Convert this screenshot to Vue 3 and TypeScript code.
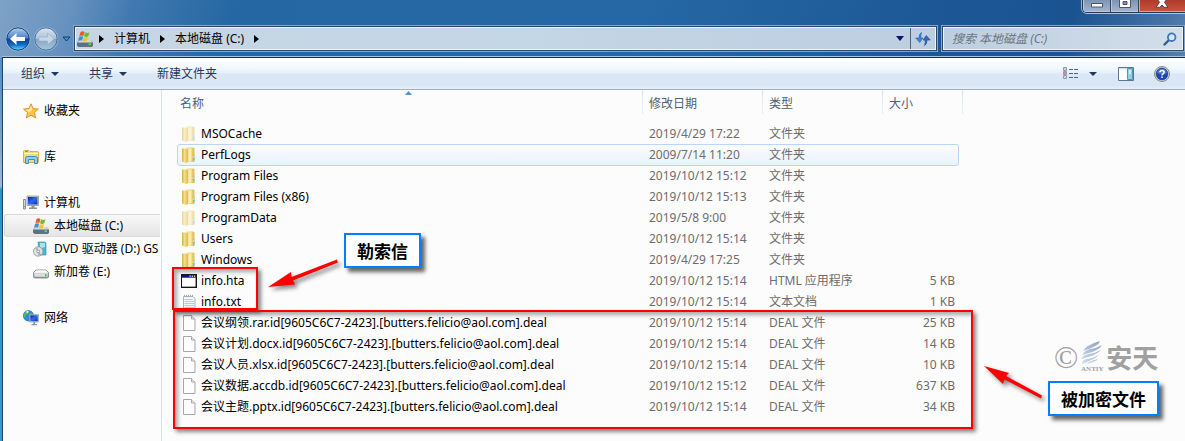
<script setup lang="ts">
interface Entry {
  name: string
  date: string
  type: string
  size: string
  icon: 'folder' | 'hta' | 'txt' | 'file'
  hidden?: boolean
  hover?: boolean
}

interface Place {
  label: string
  icon: string
  child?: boolean
  current?: boolean
}

const folder = (name: string, date: string, extra: Partial<Entry> = {}): Entry => ({
  name, date, type: '文件夹', size: '', icon: 'folder', ...extra,
})
const locked = (name: string, date: string, size: string): Entry => ({
  name: `${name}.id[9605C6C7-2423].[butters.felicio@aol.com].deal`,
  date, size, type: 'DEAL 文件', icon: 'file',
})

const entries: Entry[] = [
  folder('MSOCache', '2019/4/29 17:22', { hidden: true }),
  folder('PerfLogs', '2009/7/14 11:20', { hover: true }),
  folder('Program Files', '2019/10/12 15:12'),
  folder('Program Files (x86)', '2019/10/12 15:13'),
  folder('ProgramData', '2019/5/8 9:00', { hidden: true }),
  folder('Users', '2019/10/12 15:14'),
  folder('Windows', '2019/4/29 17:25'),
  { name: 'info.hta', date: '2019/10/12 15:14', type: 'HTML 应用程序', size: '5 KB', icon: 'hta' },
  { name: 'info.txt', date: '2019/10/12 15:14', type: '文本文档', size: '1 KB', icon: 'txt' },
  locked('会议纲领.rar', '2019/10/12 15:14', '25 KB'),
  locked('会议计划.docx', '2019/10/12 15:14', '14 KB'),
  locked('会议人员.xlsx', '2019/10/12 15:14', '10 KB'),
  locked('会议数据.accdb', '2019/10/12 15:12', '637 KB'),
  locked('会议主题.pptx', '2019/10/12 15:14', '34 KB'),
]

const groups: Place[][] = [
  [{ label: '收藏夹', icon: 'star' }],
  [{ label: '库', icon: 'library' }],
  [
    { label: '计算机', icon: 'computer' },
    { label: '本地磁盘 (C:)', icon: 'system', child: true, current: true },
    { label: 'DVD 驱动器 (D:) GS', icon: 'dvd', child: true },
    { label: '新加卷 (E:)', icon: 'drive', child: true },
  ],
  [{ label: '网络', icon: 'network' }],
]
</script>

<template>
  <div class="window">
    <svg class="defs" width="0" height="0" aria-hidden="true">
      <defs>
        <linearGradient id="folderBack" x1="0" x2="1">
          <stop offset="0" stop-color="#f9e99b" /><stop offset="1" stop-color="#dfbf58" />
        </linearGradient>
        <linearGradient id="folderFront" x1="0" x2="1">
          <stop offset="0" stop-color="#cfae48" /><stop offset=".4" stop-color="#f5e08a" /><stop offset="1" stop-color="#dcb950" />
        </linearGradient>
        <linearGradient id="orbBlue" x1="0" y1="0" x2="0" y2="1">
          <stop offset="0" stop-color="#b4cdec" /><stop offset=".46" stop-color="#4a7fc4" />
          <stop offset=".5" stop-color="#0a3f94" /><stop offset=".75" stop-color="#1069c4" /><stop offset="1" stop-color="#5ee0ff" />
        </linearGradient>
        <linearGradient id="orbGray" x1="0" y1="0" x2="0" y2="1">
          <stop offset="0" stop-color="#dbe5f0" /><stop offset=".5" stop-color="#a9c0d8" />
          <stop offset=".52" stop-color="#86a5c6" /><stop offset="1" stop-color="#a9c6e0" />
        </linearGradient>
        <linearGradient id="screen" x1="0" y1="0" x2="1" y2="1">
          <stop offset="0" stop-color="#0a1fa8" /><stop offset=".5" stop-color="#2f6bea" /><stop offset="1" stop-color="#0b2bb0" />
        </linearGradient>
        <linearGradient id="metal" x1="0" y1="0" x2="0" y2="1">
          <stop offset="0" stop-color="#f2f4f5" /><stop offset="1" stop-color="#8d9498" />
        </linearGradient>
        <linearGradient id="wing" x1="1" y1="0" x2="0" y2="1">
          <stop offset="0" stop-color="#8b9dbc" /><stop offset="1" stop-color="#cfe2f2" />
        </linearGradient>
        <symbol id="i-system" viewBox="0 0 16 16">
          <path d="M2.5 9h11L16 11.5v3L15 16H1.500L0 14.500v-3z" fill="#687278" />
          <path d="M2.500 9h11l2 2.500H.5z" fill="#d3d9dc" />
          <path d="M1 12h14v2.500H1z" fill="#4f7590" />
          <path d="M11.500 12.500h2.500v1.500h-2.500z" fill="#5de05c" />
          <path d="M3.500 1Q5.500-.3 7.500 1L6.400 5Q4.500 4 2.400 5z" fill="#ef5a24" />
          <path d="M8.200 1.300Q10.200 2.600 12.500 1.200L11.300 5.300Q9 6.500 7 5.300z" fill="#76b82a" />
          <path d="M2.200 5.700Q4.200 4.700 6.100 5.800L5 9.800Q3.200 8.800 1 9.800z" fill="#3a8fe0" />
          <path d="M6.800 6Q8.800 7 11.100 6L9.900 10Q7.800 11 5.700 10z" fill="#fbc22c" />
        </symbol>
        <symbol id="i-star" viewBox="0 0 16 16">
          <path d="M8 .8 10.100 5.600 15.400 6.100 11.400 9.600 12.700 15 8 12.100 3.300 15 4.600 9.600.6 6.100 5.900 5.600z" fill="#ffc63a" stroke="#e2902f" stroke-linejoin="round" />
          <path d="M8 2.600 9.400 6.400 5.300 10 5.600 8.700 2.600 6.700 6.500 6.400z" fill="#fff0a5" />
        </symbol>
        <symbol id="i-library" viewBox="0 0 16 16">
          <path d="M.5 13.500V2.500Q.5 1.500 1.500 1.500h4.500l1 1h7.500q1 0 1 1v10z" fill="#f1dc86" stroke="#cfb25c" />
          <path d="M1 4.500h14" stroke="#fff7cf" /><path d="M2 2.500h3" stroke="#5fb55e" />
          <path d="M2.500 14.500V9.500Q2.500 7.500 4.500 7.500h8q2 0 2 2v5h-3v-4h-6v4z" fill="#8fd0f2" stroke="#3f8dc4" />
        </symbol>
        <symbol id="i-computer" viewBox="0 0 16 16">
          <path d="M.5 4.500h2v9.500h-2z" fill="#d5d9dc" stroke="#8b9297" />
          <path d="M1 11h1v1H1z" fill="#45c13d" />
          <path d="M4 1h11.500v9.500H4z" fill="#c7cdd4" stroke="#8791a0" stroke-width=".7" />
          <path d="M5 2h9.500v7.500H5z" fill="url(#screen)" />
          <path d="M8.500 10.500h3v2h2.500V14H6v-1.500h2.500z" fill="#8c949a" />
        </symbol>
        <symbol id="i-dvd" viewBox="0 0 16 16">
          <path d="M5 1h7l1 1v12H6z" fill="#4fb6d2" stroke="#3c93b0" stroke-width=".7" />
          <path d="M7 2h5v4q-3 0-5 3z" fill="#a8e3ee" />
          <circle cx="5.200" cy="10.500" r="4.700" fill="#dfe3e5" stroke="#8b9499" stroke-width=".8" />
          <path d="M5.200 10.500 2 7.500 4.500 6.200zM5.200 10.500l3.300 3-3 1.500z" fill="#a7b2b6" />
          <circle cx="5.200" cy="10.500" r="1.400" fill="#fff" stroke="#7e888c" stroke-width=".8" />
        </symbol>
        <symbol id="i-drive" viewBox="0 0 16 16">
          <path d="M3 6h10l2.500 2.500v4.500L14.500 14h-13L.5 13V8.500z" fill="url(#metal)" stroke="#777f84" stroke-width=".8" />
          <path d="M3.200 6.400h9.600L15 8.700H1z" fill="#fafafa" />
          <path d="M1.500 9.500h13v3.200h-13z" fill="#dcdfe1" />
          <path d="M12 10.200h1.500v2H12z" fill="#3cbb3c" />
        </symbol>
        <symbol id="i-network" viewBox="0 0 16 16">
          <circle cx="5.500" cy="5.800" r="5.200" fill="#2a8de0" stroke="#1a62ad" stroke-width=".6" />
          <path d="M2 2.500Q5 0 6.500 1.500L5 4 3 5 2 8Q-.5 5 2 2.500zM6 4l3-1.500Q11 5 9 8L7 7z" fill="#55c03c" />
          <path d="M3 1.500Q5 .7 6 1.500L4 3.500z" fill="#d6f3ff" />
          <path d="M6.500 4.500h9v7.500h-9z" fill="#c5d2e0" stroke="#8494a5" stroke-width=".6" />
          <path d="M7.300 5.300h7.400v5.900H7.300z" fill="url(#screen)" />
          <path d="M10.300 12h1.700v2h2v1.300H8.500V14h1.800z" fill="#8897a5" />
        </symbol>
        <symbol id="i-folder" viewBox="0 0 16 16">
          <path d="M5 .5h7.500l1 1v13.500L5 15z" fill="url(#folderBack)" />
          <path d="M12 8.500h1.500v5H12z" fill="#6fb8ea" /><path d="M12.500 9h.7v2h-.7z" fill="#fff" />
          <path d="M1 1.500H5l2 1v12.500l-2 1-4-1.500z" fill="url(#folderFront)" />
          <path d="M7.500 2 10.500 1v13l-3 1.300z" fill="#f9ecb2" />
        </symbol>
        <symbol id="i-hta" viewBox="0 0 16 16">
          <path d="M0 1h16v14H0z" fill="#161616" /><path d="M1 2h14v11.500H1z" fill="#9a9a9a" />
          <path d="M1 5h13v8.500H1z" fill="#fff" /><path d="M1 2h14v2.500H1z" fill="#10109a" />
          <path d="M8.500 2.500h1.200v1.200H8.500zM10.700 2.500h1.200v1.200h-1.200zM12.900 2.500h1.200v1.200h-1.200z" fill="#fff" />
        </symbol>
        <symbol id="i-txt" viewBox="0 0 16 16">
          <path d="M2.500 2.500h9.500l2 2v11H2.500z" fill="#f1f6fb" stroke="#a9b1b8" />
          <path d="M3.500 5.500h8M3.500 7.500h9.500M3.500 9.500h9.500M3.500 11.500h9.500M3.500 13.500h9.500" stroke="#b4c9e2" />
          <path d="M3.500 3V.8M5.500 3V.8M7.500 3V.8M9.500 3V.8M11.500 3V.8" stroke="#a2a9af" />
        </symbol>
        <symbol id="i-file" viewBox="0 0 16 16">
          <path d="M2.500.5h8l3.500 3.500v11.500H2.500z" fill="#fdfdfd" stroke="#a6a6a6" />
          <path d="M10.500.5v3.500h3.500" fill="#e8e8e8" stroke="#ababab" />
        </symbol>
      </defs>
    </svg>

    <header class="caption">
      <div class="caption-buttons">
        <button class="cap" aria-label="最小化">
          <svg width="12" height="5" viewBox="0 0 12 5"><path d="M.5.5h11v3.500H.5z" fill="#fff" stroke="#4c5668" /></svg>
        </button>
        <button class="cap" aria-label="最大化">
          <svg width="12" height="10" viewBox="0 0 12 10"><path d="M.5.5h11v9H.5z" fill="#fff" stroke="#4c5668" /><path d="M4 3.500h4v3H4z" fill="#7f93b3" stroke="#4c5668" /></svg>
        </button>
        <button class="cap close" aria-label="关闭">
          <svg width="14" height="11" viewBox="0 0 14 11"><path d="M1 .5h4L7 3l2-2.500h4L9.500 5.300l3.500 5H9L7 8l-2 2.300H1l3.500-5z" fill="#fff" stroke="#56414b" /></svg>
        </button>
      </div>
    </header>

    <div class="navbar">
      <div class="travel">
        <div class="orbs">
          <button aria-label="后退">
            <svg width="26" height="26" viewBox="0 0 26 26">
              <circle cx="13" cy="13" r="12.300" fill="#b7cfe6" opacity=".6" /><circle cx="13" cy="13" r="11.200" fill="url(#orbBlue)" stroke="#183f72" />
              <path d="M5 13l6.500-6v4H20v4h-8.500v4z" fill="#fff" />
            </svg>
          </button>
          <button aria-label="前进">
            <svg width="26" height="26" viewBox="0 0 26 26">
              <circle cx="13" cy="13" r="12.300" fill="#a8c3dd" opacity=".6" /><circle cx="13" cy="13" r="11.200" fill="url(#orbGray)" stroke="#476f9b" />
              <path d="M21 13l-6.500-6v4H6v4h8.500v4z" fill="#c6d8e8" stroke="#93afc9" stroke-width=".6" />
            </svg>
          </button>
        </div>
        <button class="recent" aria-label="最近的页面">
          <svg width="9" height="6" viewBox="0 0 9 6"><path d="M1 1h7L4.500 5z" fill="#4f8fca" stroke="#123c6c" /></svg>
        </button>
      </div>

      <nav class="address field" aria-label="地址">
        <svg class="i16"><use href="#i-system" /></svg>
        <button class="step" aria-label="展开"><svg width="5" height="8"><path d="M0 0l5 4-5 4z" /></svg></button>
        <a href="#" class="crumb">计算机</a>
        <button class="step" aria-label="展开计算机"><svg width="5" height="8"><path d="M0 0l5 4-5 4z" /></svg></button>
        <a href="#" class="crumb">本地磁盘 (C:)</a>
        <button class="step" aria-label="展开本地磁盘"><svg width="5" height="8"><path d="M0 0l5 4-5 4z" /></svg></button>
        <button class="history" aria-label="以前的位置"><svg width="8" height="5"><path d="M0 0h8L4 5z" fill="#0c1460" /></svg></button>
        <button class="refresh" aria-label="刷新">
          <svg width="16" height="14" viewBox="0 0 16 14">
            <path d="M6.500.5Q4 1.500 4 6H.8L4.700 10.500 8 6H6Q5.500 3 6.500.5z" fill="#3e86d2" stroke="#235fa8" stroke-width=".6" />
            <path d="M9.500 13.500Q12 12.500 12 8h3.200L11.300 3.500 8 8h2Q10.500 11 9.500 13.500z" fill="#3568b8" stroke="#1f4a93" stroke-width=".6" />
          </svg>
        </button>
      </nav>

      <label class="search field">
        <input type="search" placeholder="搜索 本地磁盘 (C:)" aria-label="搜索 本地磁盘 (C:)" />
        <svg width="14" height="14" viewBox="0 0 14 14" fill="none">
          <path d="M1.500 12.500 6 8" stroke="#2b5e9d" stroke-width="2.400" stroke-linecap="round" />
          <circle cx="8.700" cy="5.200" r="3.800" fill="#d5e7f5" stroke="#3978ba" stroke-width="1.800" />
        </svg>
      </label>
    </div>

    <div class="client">
      <div class="toolbar">
        <button>组织<svg width="8" height="4"><path d="M0 0h8L4 4z" /></svg></button>
        <button>共享<svg width="8" height="4"><path d="M0 0h8L4 4z" /></svg></button>
        <button>新建文件夹</button>
        <div class="tools">
          <button class="view" aria-label="更改您的视图">
            <svg width="15" height="13" viewBox="0 0 15 13">
              <path d="M.5.500h3v3h-3zM.5 4.500h3v3h-3zM.5 8.500h3v3h-3z" fill="#fff" stroke="#8c9bb4" />
              <path d="M1.500 1.500h1v1h-1zM1.500 9.500h1v1h-1z" fill="#35507b" /><path d="M1.200 5.200h1.600v1.600H1.200z" fill="#d33" />
              <path d="M6 2.500h4M11 2.500h4M6 6.500h4M11 6.500h4M6 10.500h4M11 10.500h4" stroke="#4f6587" />
            </svg>
          </button>
          <button class="view-more" aria-label="更多选项"><svg width="8" height="4"><path d="M0 0h8L4 4z" /></svg></button>
          <button class="preview" aria-label="显示预览窗格">
            <svg width="16" height="14" viewBox="0 0 16 14">
              <path d="M.5.500h15v13H.5z" fill="#fff" stroke="#5c7590" /><path d="M1 1h14v1.500H1z" fill="#d5e2ee" />
              <path d="M9.500 1.500h5v11h-5z" fill="#8fd3ea" stroke="#4c97b5" /><path d="M11 3h2v4h-2z" fill="#c9eef7" />
            </svg>
          </button>
          <button class="help" aria-label="获取帮助">
            <svg width="16" height="16" viewBox="0 0 16 16">
              <circle cx="8" cy="8" r="7.500" fill="#d6d8db" stroke="#85898f" /><circle cx="8" cy="8" r="5.900" fill="#1b48b5" stroke="#173583" stroke-width=".6" />
              <path d="M3 7Q4 3 8 2.800T13 7Q8 9 3 7z" fill="#6289de" opacity=".7" />
              <path d="M5.900 6.300Q6 4.500 8 4.500T10.100 6.200Q10.100 7.300 8.900 8 8 8.500 8 9.500M8 10.600v1.500" fill="none" stroke="#fff" stroke-width="1.500" />
            </svg>
          </button>
        </div>
      </div>

      <div class="body">
        <nav class="tree" aria-label="导航窗格">
          <ul v-for="(group, g) in groups" :key="g">
            <li v-for="place in group" :key="place.label">
              <a href="#" :class="{ child: place.child, current: place.current }">
                <svg class="i16"><use :href="`#i-${place.icon}`" /></svg><span>{{ place.label }}</span>
              </a>
            </li>
          </ul>
        </nav>

        <main class="content">
          <table>
            <thead>
              <tr>
                <th scope="col" class="sorted" aria-sort="ascending">名称
                  <svg class="sort" width="7" height="4"><path d="M0 4h7L3.500 0z" fill="#5a93b8" /></svg>
                </th>
                <th scope="col">修改日期</th>
                <th scope="col">类型</th>
                <th scope="col">大小</th>
              </tr>
            </thead>
            <tbody>
              <tr v-for="entry in entries" :key="entry.name" :class="{ hover: entry.hover }">
                <td class="name">
                  <svg class="i16" :class="{ faded: entry.hidden }"><use :href="`#i-${entry.icon}`" /></svg>{{ entry.name }}
                </td>
                <td>{{ entry.date }}</td>
                <td>{{ entry.type }}</td>
                <td class="size">{{ entry.size }}</td>
              </tr>
            </tbody>
          </table>
        </main>
      </div>
    </div>

    <div class="frame frame-note"></div>
    <div class="frame frame-locked"></div>
    <svg class="arrow arrow-note" width="72" height="30" viewBox="0 0 72 30">
      <path d="M0 28 23 13 23.500 18 69 .5 70 3.500 25 21.500 27 25.500z" fill="#f00" />
    </svg>
    <svg class="arrow arrow-locked" width="62" height="36" viewBox="0 0 62 36">
      <path d="M0 0 25 7 22 10 58 29.500 57 32.500 20.500 13.500 19 18z" fill="#f00" />
    </svg>
    <div class="callout callout-note">勒索信</div>
    <div class="callout callout-locked">被加密文件</div>

    <div class="brand">
      <span class="copy">©</span>
      <span class="mark">
        <svg width="22" height="24" viewBox="0 0 22 24" fill="url(#wing)">
          <path d="M19 0Q18 5 2 10 5 4 19 0zM21 4Q18 10 1 14 3 10 9 8 16 7 21 4zM20 9Q16 14 0 18 2 14 8 13 15 12 20 9zM18 14Q14 18 1 23 1 19 6 18 13 17 18 14zM17 18Q14 21 5 23 9 20 17 18z" />
        </svg>
        <small>ANTIY</small>
      </span>
      <span class="word">安天</span>
    </div>
  </div>
</template>

<style>
body {
  margin: 0;
}
</style>

<style scoped>
.window {
  position: relative;
  box-sizing: border-box;
  display: flex;
  flex-direction: column;
  min-height: 100vh;
  padding-left: 2px;
  overflow: hidden;
  font: 12px/20px "Noto Sans", "Noto Sans CJK SC", sans-serif;
  color: #000;
  background:
    linear-gradient(#5690c4, #6c9cc8 60px, #9dbbd3 128px, #2f93d0 132px, #3d9ad6) 0 58px / 3px 100% no-repeat,
    linear-gradient(105deg, #7fa2c7 0, #6792bf 70px, #4079b0 130px, #2567a2 230px, #2568a5 620px, #1d5896 900px, #1a5390 1040px, #4a76a8 1140px, #7d99bc 1200px);
}
.defs { position: absolute; }
svg { display: block; flex: none; }
.i16 { width: 16px; height: 16px; }
button {
  display: flex;
  align-items: center;
  justify-content: center;
  padding: 0;
  border: 0;
  background: none;
  font: inherit;
  color: inherit;
}
a { color: inherit; text-decoration: none; }

.caption { display: flex; justify-content: flex-end; height: 26px; }
.caption-buttons {
  display: flex;
  height: 12px;
  border: 1px solid #26384f;
  border-width: 0 0 1px 1px;
  border-radius: 0 0 0 5px;
  box-shadow: 0 1px 0 #b4c5da, -1px 0 0 #9bb2cd;
  overflow: hidden;
}
.cap {
  width: 28px;
  align-items: flex-end;
  padding-bottom: 4px;
  border-right: 1px solid #34465e;
  background: linear-gradient(#7e94b5, #a4b6cf);
  box-shadow: inset 1px -1px 0 #b9c8db;
}
.close { width: 46px; border-right: 0; background: linear-gradient(#b03a2a, #c9563f); box-shadow: inset 1px -1px 0 #e0a08f; }

.navbar { display: flex; align-items: center; height: 25px; padding: 0 2px 5px 0; }
.travel {
  display: flex;
  align-items: center;
  gap: 1px;
  margin-left: 3px;
}
.orbs {
  display: flex;
  gap: 2px;
  border-radius: 13px;
  background: #6f9bc680;
}
.recent { width: 12px; }
.field {
  box-sizing: border-box;
  display: flex;
  align-items: center;
  height: 23px;
  border: 1px solid #f0f4f8;
  outline: 1px solid #2a4868;
  box-shadow: 0 0 0 2px #83a7ca;
  background: #c3d5e5;
}
.address { flex: 1; margin: 0 7px 0 3px; padding-left: 1px; background: linear-gradient(90deg, #c6d5e4, #c4d7e6 50%, #bccee0); }
.step { width: 17px; height: 100%; }
.crumb { padding: 0 4px; white-space: nowrap; }
.history { width: 20px; height: 100%; margin-left: auto; }
.refresh { width: 25px; height: 100%; border-left: 1px solid #4d6682; }
.search { width: 240px; padding-right: 5px; background: linear-gradient(90deg, #bccee0, #d3deea); }
.search input {
  flex: 1;
  min-width: 0;
  padding: 0 0 0 8px;
  border: 0;
  outline: 0;
  background: none;
  font: italic 12px/20px "Noto Sans", "Noto Sans CJK SC", sans-serif;
}
.search input::placeholder { color: #6d7680; opacity: 1; }

.client {
  flex: 1;
  display: flex;
  flex-direction: column;
  margin-top: 1px;
  border-top: 1px solid #14304f;
  border-left: 1px solid #1c4469;
  box-shadow: 0 -1px 0 #a9c3dc;
  background: #fcfcfc;
}
.toolbar {
  display: flex;
  align-items: center;
  height: 31px;
  padding: 0 15px 0 18px;
  border-bottom: 1px solid #a0afc8;
  color: #1e395b;
  background: linear-gradient(#fff, #f3f9fe 30%, #e6f0fa 48%, #dbe7f5 52%, #dae6f4 90%, #e6f0f9);
}
.toolbar > button { margin-right: 30px; }
.toolbar > button svg { margin-left: 6px; }
.toolbar svg > path:only-child { fill: #1e395b; }
.tools { display: flex; align-items: center; margin-left: auto; }
.view-more { margin-left: 11px; }
.preview { margin-left: 21px; }
.help { margin-left: 20px; }

.body { flex: 1; display: flex; }
.tree {
  box-sizing: border-box;
  flex: none;
  width: 159px;
  padding: 9px 1px 0;
  border-right: 1px solid #d9e3f0;
}
ul { margin: 0 0 23px; padding: 0; list-style: none; }
.tree a {
  box-sizing: border-box;
  display: flex;
  align-items: center;
  gap: 5px;
  height: 23px;
  padding-left: 19px;
  overflow: hidden;
  white-space: nowrap;
}
.tree a.child { padding-left: 29px; }
.tree a.current {
  padding-left: 28px;
  border: 1px solid #d9d9d9;
  border-right: 0;
  border-radius: 3px 0 0 3px;
  background: linear-gradient(#f8f8f8, #e5e5e5);
}

.content { flex: 1; min-width: 0; padding-left: 15px; }
table { display: block; width: 786px; }
thead, tbody { display: block; }
tr { display: grid; grid-template-columns: 466px 120px 120px 1fr; }
thead tr { height: 33px; color: #4c607a; }
th {
  position: relative;
  height: 24px;
  padding: 4px 6px 0;
  box-sizing: border-box;
  border-style: solid;
  border-width: 0 1px 0 0;
  border-image: linear-gradient(#d5e3f2, #e9f0f8) 1;
  font-weight: 400;
  text-align: left;
}
th.sorted { padding-left: 3px; }
.sort { position: absolute; top: 1px; left: 50%; margin-left: -5px; }
tbody tr {
  box-sizing: border-box;
  height: 22px;
  margin: 0 4px -1px 0;
  border: 1px solid transparent;
  border-radius: 3px;
}
tbody tr.hover { border-color: #b8d6fb; background: linear-gradient(#fafcff, #ebf3fd); }
td { padding: 0 5px; color: #6d6d6d; white-space: nowrap; }
td.name { display: flex; align-items: center; gap: 4px; padding: 0 0 0 3px; color: #000; }
td.size { padding-right: 3px; text-align: right; }
.faded { opacity: .5; }

.frame { position: absolute; box-sizing: border-box; border: 2px solid #f00; box-shadow: 3px 3px 4px #0007, inset 3px 3px 4px #0005; pointer-events: none; }
.frame-note { left: 172px; top: 267px; width: 86px; height: 43px; }
.frame-locked { left: 173px; top: 310px; width: 800px; height: 119px; }
.arrow { position: absolute; overflow: visible; filter: drop-shadow(3px 3px 2px #0007); }
.arrow-note { left: 268px; top: 259px; }
.arrow-locked { left: 984px; top: 366px; }
.callout {
  position: absolute;
  padding: 0 11px;
  border: 2px solid #0080ff;
  background: #fff;
  box-shadow: 4px 4px 4px #0009;
  font: 700 17px/31px "Noto Sans CJK SC", sans-serif;
  white-space: nowrap;
}
.callout-note { left: 344px; top: 233px; }
.callout-locked { left: 1048px; top: 381px; }

.brand { position: absolute; left: 1054px; top: 339px; display: flex; align-items: center; gap: 3px; color: #a0a0a0; }
.copy { font: 32px/36px "Liberation Serif", serif; }
.mark { display: flex; flex-direction: column; align-items: center; width: 22px; }
.mark small { font: 700 7px/8px "Liberation Serif", serif; }
.word { font: 700 26px/36px "Noto Sans CJK SC", sans-serif; }
</style>
